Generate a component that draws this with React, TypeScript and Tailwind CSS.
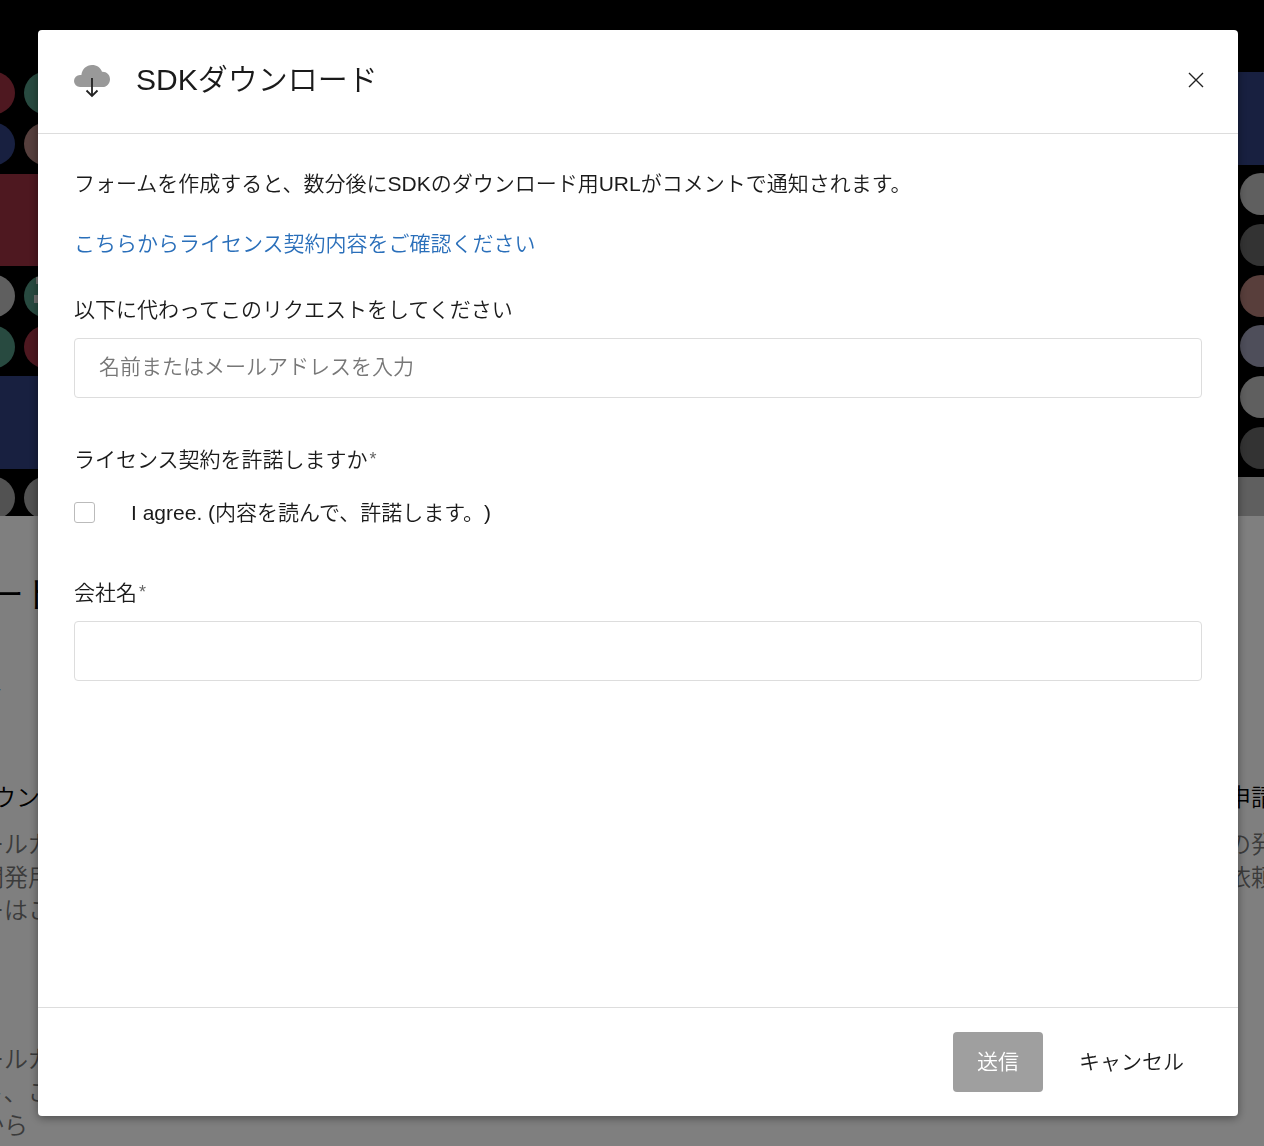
import React, { useState } from "react";

const CIRCLES_LEFT = [
  { cx: -6, cy: 93, fill: "#9c3040" },
  { cx: 45, cy: 93, fill: "#509480" },
  { cx: -6, cy: 144, fill: "#304080" },
  { cx: 45, cy: 144, fill: "#ac7e7a" },
  { cx: -6, cy: 296, fill: "#bebebe" },
  { cx: 45, cy: 296, fill: "#509480" },
  { cx: -6, cy: 347, fill: "#509480" },
  { cx: 45, cy: 347, fill: "#9c3040" },
  { cx: -6, cy: 498, fill: "#a4a4a4" },
  { cx: 45, cy: 498, fill: "#a4a4a4" },
];

const CIRCLES_RIGHT = [
  { cx: 25, cy: 194, fill: "#bebebe" },
  { cx: 25, cy: 245, fill: "#666666" },
  { cx: 25, cy: 296, fill: "#b07c76" },
  { cx: 25, cy: 346, fill: "#9c9cb4" },
  { cx: 25, cy: 397, fill: "#bebebe" },
  { cx: 25, cy: 448, fill: "#666666" },
];

function HeroArt() {
  return (
    <div className="flex h-[516px] justify-between bg-black">
      <svg width="40" height="516" aria-hidden="true">
        <rect y="174" width="40" height="92" fill="#9c3040" />
        <rect y="376" width="40" height="93" fill="#304080" />
        {CIRCLES_LEFT.map((c) => (
          <circle key={`${c.cx}-${c.cy}`} cx={c.cx} cy={c.cy} r="21" fill={c.fill} />
        ))}
        <path d="M36 277h4v7h-4zM34 295h6v8h-6z" fill="#dcdcdc" />
      </svg>
      <svg width="28" height="516" aria-hidden="true">
        <rect y="72" width="28" height="93" fill="#304080" />
        <rect y="477" width="28" height="39" fill="#bebebe" />
        {CIRCLES_RIGHT.map((c) => (
          <circle key={c.cy} cx={c.cx} cy={c.cy} r="21" fill={c.fill} />
        ))}
      </svg>
    </div>
  );
}

function BackgroundPage() {
  return (
    <div className="h-screen overflow-hidden bg-white text-2xl leading-[33px] text-[#777]" aria-hidden="true">
      <HeroArt />
      <div className="flex justify-between whitespace-nowrap">
        <div className="-ml-5 w-16">
          <p className="ml-2 pt-14 text-4xl leading-12 text-black">ード</p>
          <p className="pt-13 text-black">ト</p>
          <p className="ml-3 pt-19 text-black">ウン</p>
          <p className="pt-3.5">ールカ</p>
          <p>開発用</p>
          <p>ーはこ</p>
          <p className="pt-29">ールカ</p>
          <p>ト、こ</p>
          <p>から</p>
        </div>
        <div className="w-[37px] overflow-hidden pt-[265px]">
          <p className="text-black">申請</p>
          <p className="pt-3.5">の発</p>
          <p>依頼</p>
        </div>
      </div>
    </div>
  );
}

function CloudDownloadIcon() {
  return (
    <svg width="36" height="36" viewBox="0 0 36 36" fill="none" aria-hidden="true">
      <path
        d="M6 25a6 6 0 0 1 0-12h1.400C8 7.200 12.400 3 18 3c4.800 0 8.600 2.600 10 6.800C32.800 9.600 36 13 36 17.200S32.800 25 28.600 25Z"
        fill="#999"
      />
      <path d="M18 16v18M12.500 28.500 18 34l5.500-5.500" stroke="#222" strokeWidth="1.800" />
    </svg>
  );
}

function Required() {
  return <span className="ml-0.5 align-[2px] text-lg leading-6 text-[#666]">*</span>;
}

const FIELD =
  "h-[60px] w-full rounded-sm border border-[#ddd] bg-white px-6 pb-0.5 text-[#222] outline-none placeholder:text-[#777] focus:border-[#999]";

export default function App() {
  const [open, setOpen] = useState(true);
  return (
    <div
      className="font-['Liberation_Sans','Noto_Sans_CJK_JP',sans-serif] font-[350] [text-spacing-trim:space-all]"
      lang="ja"
    >
      <BackgroundPage />
      {open && (
        <div className="fixed inset-0 flex bg-black/50 py-[30px] pr-[26px] pl-[38px]">
          <form
            role="dialog"
            aria-modal="true"
            aria-labelledby="dialog-title"
            onSubmit={(e: React.FormEvent) => e.preventDefault()}
            className="flex min-w-0 flex-1 flex-col rounded bg-white text-[21px] leading-8 text-[#1a1a1a] shadow-[0_2px_10px_rgba(0,0,0,0.4)]"
          >
            <header className="flex h-[104px] shrink-0 items-center border-b border-[#ddd] px-9 pb-1">
              <CloudDownloadIcon />
              <h2 id="dialog-title" className="ml-[26px] flex-1 text-[30px] leading-10">
                SDKダウンロード
              </h2>
              <button type="button" aria-label="閉じる" onClick={() => setOpen(false)} className="-mr-1 p-0.5">
                <svg width="16" height="16" viewBox="0 0 16 16" stroke="#222" strokeWidth="1.400" aria-hidden="true">
                  <path d="m1 1 14 14M15 1 1 15" />
                </svg>
              </button>
            </header>

            <main className="flex-1 overflow-y-auto px-9 pt-[34px]">
              <p>フォームを作成すると、数分後にSDKのダウンロード用URLがコメントで通知されます。</p>
              <p className="mt-7">
                <a href="#license" className="text-[#2a6fba]">
                  こちらからライセンス契約内容をご確認ください
                </a>
              </p>

              <label htmlFor="requester" className="mt-[34px] mb-3 block">
                以下に代わってこのリクエストをしてください
              </label>
              <input id="requester" type="text" placeholder="名前またはメールアドレスを入力" className={FIELD} />

              <fieldset className="mt-[46px]">
                <legend>
                  ライセンス契約を許諾しますか
                  <Required />
                </legend>
                <label className="mt-[19px] flex items-center">
                  <input
                    type="checkbox"
                    className="mr-9 size-[21px] appearance-none rounded-[3px] border border-[#bbb] checked:bg-[#2a6fba]"
                  />
                  <span className="pt-0.5">I agree. (内容を読んで、許諾します。)</span>
                </label>
              </fieldset>

              <label htmlFor="company" className="mt-12 mb-3 block">
                会社名
                <Required />
              </label>
              <input id="company" type="text" required className={FIELD} />
            </main>

            <footer className="flex shrink-0 justify-end border-t border-[#ddd] px-9 py-6">
              <button type="submit" className="h-[60px] rounded-sm bg-[#9f9f9f] px-6 text-white">
                送信
              </button>
              <button type="button" onClick={() => setOpen(false)} className="h-[60px] pr-[18px] pl-9">
                キャンセル
              </button>
            </footer>
          </form>
        </div>
      )}
    </div>
  );
}
